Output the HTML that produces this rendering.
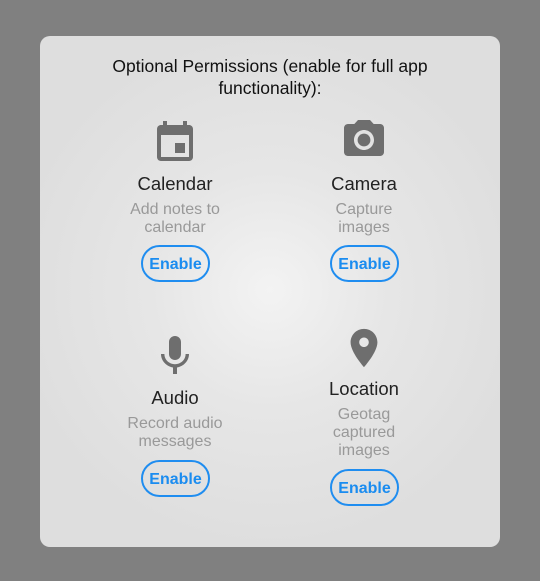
<!DOCTYPE html>
<html><head><meta charset="utf-8"><style>
html,body{margin:0;padding:0;width:540px;height:581px;background:#808080;overflow:hidden;font-family:"Liberation Sans",sans-serif}
.card{position:absolute;left:40px;top:36px;width:460px;height:511px;border-radius:10px;background:radial-gradient(circle at 230px 254px,#f3f3f3 0,#e6e6e6 120px,#dedede 260px)}
.t{position:absolute;left:0;width:540px;text-align:center;white-space:nowrap}
.title{font-size:17.5px;color:#111;line-height:22px}
.lab{font-size:18.5px;color:#222;line-height:22px}
.desc{font-size:16px;color:#999;line-height:18px}
.btn{position:absolute;width:65px;height:33px;border:2px solid #1f8df0;border-radius:19px;color:#1a8cf0;font-weight:bold;font-size:16px;line-height:36px;text-align:center}
svg{position:absolute;fill:#6e6e6e}
</style></head><body>
<div class="card"></div>
<div class="t title" style="top:55px">Optional Permissions (enable for full app</div>
<div class="t title" style="top:77px">functionality):</div>

<svg style="left:151px;top:119px" width="48" height="48" viewBox="0 0 24 24"><path d="M17 12h-5v5h5v-5zM16 1v2H8V1H6v2H5c-1.11 0-1.99.9-1.99 2L3 19c0 1.1.89 2 2 2h14c1.1 0 2-.9 2-2V5c0-1.1-.9-2-2-2h-1V1h-2zm3 18H5V8h14v11z"/></svg>
<div class="t lab" style="left:-95px;top:173px">Calendar</div>
<div class="t desc" style="left:-95px;top:201px">Add notes to</div>
<div class="t desc" style="left:-95px;top:219px">calendar</div>
<div class="btn" style="left:141px;top:245px">Enable</div>

<svg style="left:340px;top:116px" width="48" height="48" viewBox="0 0 24 24"><circle cx="12" cy="12" r="3.2"/><path d="M9 2L7.17 4H4c-1.1 0-2 .9-2 2v12c0 1.1.9 2 2 2h16c1.1 0 2-.9 2-2V6c0-1.1-.9-2-2-2h-3.17L15 2H9zm3 15c-2.76 0-5-2.24-5-5s2.24-5 5-5 5 2.24 5 5-2.24 5-5 5z"/></svg>
<div class="t lab" style="left:94px;top:173px">Camera</div>
<div class="t desc" style="left:94px;top:201px">Capture</div>
<div class="t desc" style="left:94px;top:219px">images</div>
<div class="btn" style="left:330px;top:245px">Enable</div>

<svg style="left:151px;top:332px" width="48" height="48" viewBox="0 0 24 24"><path d="M12 14c1.66 0 2.99-1.34 2.99-3L15 5c0-1.66-1.34-3-3-3S9 3.34 9 5v6c0 1.66 1.34 3 3 3zm5.3-3c0 3-2.54 5.1-5.3 5.1S6.7 14 6.7 11H5c0 3.41 2.72 6.23 6 6.72V21h2v-3.28c3.28-.48 6-3.3 6-6.72h-1.7z"/></svg>
<div class="t lab" style="left:-95px;top:387px">Audio</div>
<div class="t desc" style="left:-95px;top:415px">Record audio</div>
<div class="t desc" style="left:-95px;top:433px">messages</div>
<div class="btn" style="left:141px;top:460px">Enable</div>

<svg style="left:341px;top:325px" width="46" height="46" viewBox="0 0 24 24"><path d="M12 2C8.13 2 5 5.13 5 9c0 5.25 7 13 7 13s7-7.75 7-13c0-3.870-3.13-7-7-7zm0 9.5c-1.38 0-2.5-1.12-2.5-2.5s1.120-2.5 2.5-2.5 2.5 1.12 2.5 2.5-1.12 2.5-2.5 2.5z"/></svg>
<div class="t lab" style="left:94px;top:378px">Location</div>
<div class="t desc" style="left:94px;top:406px">Geotag</div>
<div class="t desc" style="left:94px;top:424px">captured</div>
<div class="t desc" style="left:94px;top:442px">images</div>
<div class="btn" style="left:330px;top:469px">Enable</div>
</body></html>
